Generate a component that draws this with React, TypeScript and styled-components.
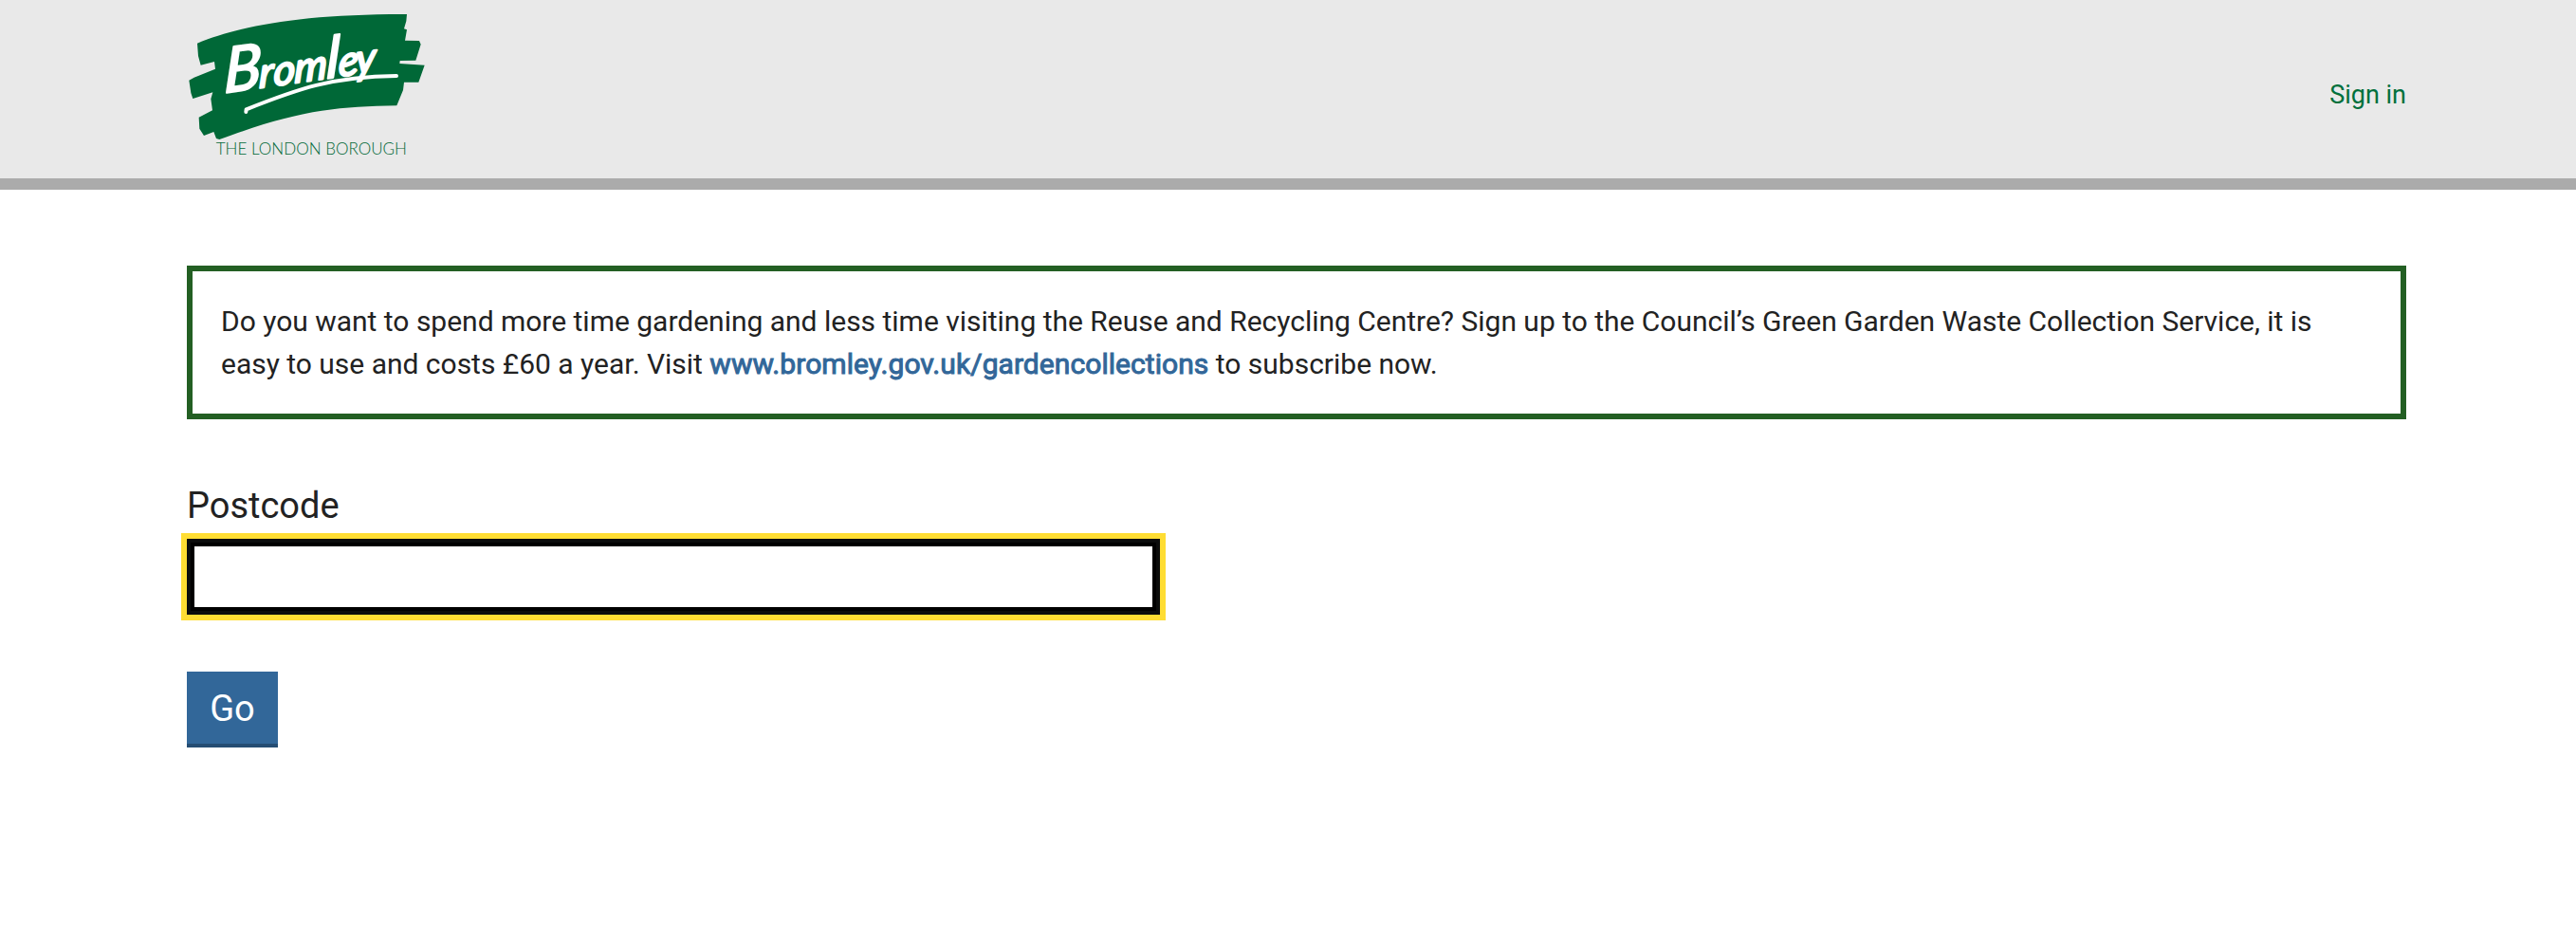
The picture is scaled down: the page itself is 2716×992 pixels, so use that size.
import React from "react";
import styled, { createGlobalStyle } from "styled-components";

const GlobalStyle = createGlobalStyle`
  *, *::before, *::after { box-sizing: border-box; }
  body {
    margin: 0;
    background: #fff;
    color: #222;
    font-family: Roboto, "Liberation Sans", sans-serif;
  }
`;

const Header = styled.header`
  display: flex;
  justify-content: space-between;
  align-items: flex-start;
  height: 200px;
  padding: 10px 179px 0 197px;
  background: #e9e9e9;
  border-bottom: 12px solid #ababab;
`;

const LogoLink = styled.a`
  display: block;
  line-height: 0;
`;

const SignIn = styled.a`
  margin-top: 70px;
  color: #00703c;
  font-size: 27px;
  line-height: 40px;
  text-decoration: none;
`;

const Main = styled.main`
  display: flex;
  flex-direction: column;
  padding: 80px 179px 0 197px;
`;

const Notice = styled.p`
  margin: 0;
  height: 162px;
  padding: 30px;
  border: 6px solid #235f23;
  font-size: 30px;
  line-height: 45px;
  letter-spacing: -0.012px;
`;

const NoticeLink = styled.a`
  color: #326799;
  text-decoration: none;
  letter-spacing: 0.06px;
  -webkit-text-stroke: 1px #326799;
`;

const Form = styled.form`
  display: flex;
  flex-direction: column;
  align-items: flex-start;
  margin-top: 62px;
`;

const Label = styled.label`
  height: 64px;
  padding-top: 1px;
  font-size: 38px;
  line-height: 57px;
`;

const PostcodeInput = styled.input`
  width: 1026px;
  height: 80px;
  padding: 8px 16px;
  border: 4px solid #0b0c0c;
  border-radius: 0;
  outline: 6px solid #ffdd33;
  background: #fff;
  box-shadow: inset 0 0 0 4px #000;
  font: 38px Roboto, sans-serif;
`;

const GoButton = styled.button`
  width: 96px;
  height: 80px;
  margin-top: 60px;
  padding: 0 0 2px;
  border: 0;
  border-radius: 0;
  background: #326799;
  box-shadow: inset 0 -4px 0 #254d73;
  color: #fff;
  font: 38px Roboto, sans-serif;
`;

const Logo = () => (
  <svg width="252" height="156" viewBox="51 30 756 468" role="img" aria-label="Bromley, the London Borough">
    <path
      fill="#006837"
      d="M84 137C210 84 410 44 747 45L745 67L738 91L747 94L741 128L786 129L791 140L775 191L725 192L724 201L803 206L784 260L738 260L735 285L715 334C520 337 400 350 154 441L144 438L136 417L105 429L91 407L89 371L132 349L127 313L133 292L70 312L64 294L58 254L74 245L141 218L138 195L95 206L87 177Z"
    />
    <path
      fill="none"
      stroke="#fff"
      strokeWidth="12"
      strokeLinecap="round"
      strokeLinejoin="round"
      d="M238 354L239 346C400 282 510 242 714 240"
    />
    <g transform="translate(168 294) rotate(-8) skewX(-10)">
      <text
        fill="#fff"
        stroke="#fff"
        strokeWidth="7"
        strokeLinecap="round"
        strokeLinejoin="round"
        fontFamily="Lato, sans-serif"
        fontStyle="italic"
        fontSize="132"
        x="0 112 158 225 327 366 420"
      >
        <tspan fontSize="196">B</tspan>rom<tspan fontSize="180">l</tspan>ey
      </text>
    </g>
    <text
      x="143"
      y="489"
      fill="#006837"
      fontFamily="Lato, sans-serif"
      fontWeight="300"
      fontSize="50"
      textLength="604"
      lengthAdjust="spacingAndGlyphs"
    >
      THE LONDON BOROUGH
    </text>
  </svg>
);

export default function App() {
  return (
    <>
      <GlobalStyle />
      <Header>
        <LogoLink href="#">
          <Logo />
        </LogoLink>
        <SignIn href="#">Sign in</SignIn>
      </Header>
      <Main>
        <Notice>
          Do you want to spend more time gardening and less time visiting the Reuse and Recycling Centre? Sign up to
          the Council’s Green Garden Waste Collection Service, it is easy to use and costs £60 a year. Visit{" "}
          <NoticeLink href="#">www.bromley.gov.uk/gardencollections</NoticeLink> to subscribe now.
        </Notice>
        <Form>
          <Label htmlFor="pc">Postcode</Label>
          <PostcodeInput id="pc" type="text" />
          <GoButton type="button">Go</GoButton>
        </Form>
      </Main>
    </>
  );
}
